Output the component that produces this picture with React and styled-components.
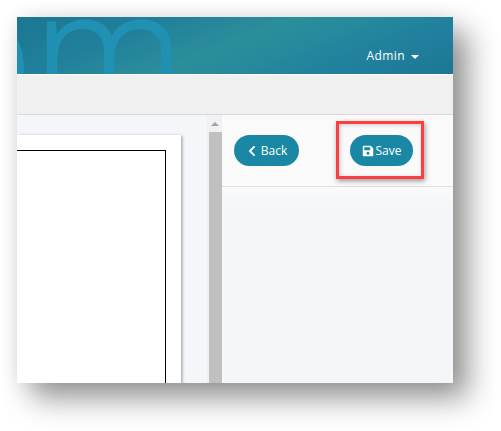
import React from "react";
import styled, { createGlobalStyle } from "styled-components";
import { FaChevronLeft, FaSave } from "react-icons/fa";

const Global = createGlobalStyle`
  html, body {
    margin: 0;
    background: #fff;
  }
  body {
    font-family: "Open Sans", "Liberation Sans", sans-serif;
  }
`;

const Page = styled.div`
  width: 501px;
  height: 431px;
  padding: 17px 0 0 17px;
  box-sizing: border-box;
  overflow: hidden;
`;

const Frame = styled.div`
  width: 436px;
  height: 366px;
  display: flex;
  flex-direction: column;
  background: #f5f6fa;
  box-shadow: 15px 15px 28px rgba(0, 0, 0, 0.42), 0 0 18px rgba(0, 0, 0, 0.07);
`;

const Header = styled.header`
  position: relative;
  height: 57px;
  flex: none;
  box-sizing: border-box;
  display: flex;
  justify-content: flex-end;
  align-items: flex-end;
  padding: 0 34px 9px 0;
  overflow: hidden;
  background: linear-gradient(
    158deg,
    #1c7691 0%,
    #20809c 26%,
    #2b8e9a 48%,
    #278a9c 60%,
    #20809e 78%,
    #1c7894 100%
  );
`;

const Watermark = styled.span`
  position: absolute;
  left: -85px;
  top: -70px;
  font-family: "Open Sans", sans-serif;
  font-weight: 300;
  font-size: 172px;
  line-height: 200px;
  color: #2191b3;
  -webkit-text-stroke: 2px #2191b3;
  user-select: none;
`;

const UserMenu = styled.div`
  display: flex;
  align-items: center;
  gap: 6px;
  color: #fff;
  font-size: 12px;
  letter-spacing: 0.4px;
  line-height: 18px;
`;

const Caret = styled.i`
  width: 0;
  height: 0;
  margin-top: 2px;
  border-top: 4px solid #fff;
  border-left: 4px solid transparent;
  border-right: 4px solid transparent;
`;

const Toolbar = styled.div`
  height: 41px;
  flex: none;
  box-sizing: border-box;
  border-top: 1px solid #fff;
  border-bottom: 1px solid #d9d9dc;
  background: #f0f0f0;
`;

const Body = styled.div`
  flex: 1;
  min-height: 0;
  display: flex;
`;

const CanvasArea = styled.div`
  width: 190px;
  flex: none;
  padding-top: 20px;
  overflow: hidden;
  background: #f5f6fa;
`;

const Paper = styled.div`
  width: 164px;
  height: 300px;
  padding: 15px 15px 0 0;
  box-sizing: border-box;
  background: #fff;
  box-shadow: 1px 1px 3px rgba(0, 0, 0, 0.4);
`;

const PrintArea = styled.div`
  height: 100%;
  border: 1px solid #000;
  border-left: 0;
`;

const Scrollbar = styled.div`
  width: 15px;
  flex: none;
  display: flex;
  flex-direction: column;
  background: #f1f1f3;
`;

const ScrollArrow = styled.div`
  height: 17px;
  flex: none;
  display: flex;
  justify-content: center;
  align-items: center;

  &::before {
    content: "";
    border-bottom: 4px solid #a3a3a3;
    border-left: 4px solid transparent;
    border-right: 4px solid transparent;
  }
`;

const ScrollThumb = styled.div`
  flex: 1;
  margin-left: 2px;
  background: #c0c0c0;
`;

const Panel = styled.aside`
  flex: 1;
  display: flex;
  flex-direction: column;
`;

const Actions = styled.div`
  position: relative;
  height: 72px;
  flex: none;
  box-sizing: border-box;
  padding: 20px 0 0 12px;
  display: flex;
  align-items: flex-start;
  gap: 51px;
  border-bottom: 1px solid #dedede;
  background: #fafafa;
`;

const Fade = styled.div`
  height: 16px;
  flex: none;
  background: linear-gradient(#fafafa, #f5f6fa);
`;

const PillButton = styled.button`
  width: ${(p) => p.$width}px;
  height: 31px;
  padding: 0;
  display: flex;
  justify-content: center;
  align-items: center;
  gap: ${(p) => p.$gap}px;
  border: 0;
  border-radius: 16px;
  background: #1a88a4;
  color: #fff;
  font-family: "Open Sans", sans-serif;
  font-size: 12px;
  font-weight: 500;
  line-height: 18px;
`;

const Highlight = styled.div`
  position: absolute;
  left: 114px;
  top: 6px;
  width: 88px;
  height: 58px;
  box-sizing: border-box;
  border: 3px solid #f9403f;
  box-shadow: 1px 2px 5px rgba(0, 0, 0, 0.4), inset 1px 1px 4px rgba(0, 0, 0, 0.2);
`;

export default function App() {
  return (
    <>
      <Global />
      <Page>
        <Frame>
          <Header>
            <Watermark>om</Watermark>
            <UserMenu>
              Admin
              <Caret />
            </UserMenu>
          </Header>
          <Toolbar />
          <Body>
            <CanvasArea>
              <Paper>
                <PrintArea />
              </Paper>
            </CanvasArea>
            <Scrollbar>
              <ScrollArrow />
              <ScrollThumb />
            </Scrollbar>
            <Panel>
              <Actions>
                <PillButton $width={65} $gap={3}>
                  <FaChevronLeft size={12} />
                  Back
                </PillButton>
                <PillButton $width={63} $gap={2}>
                  <FaSave size={12} />
                  Save
                </PillButton>
                <Highlight />
              </Actions>
              <Fade />
            </Panel>
          </Body>
        </Frame>
      </Page>
    </>
  );
}
